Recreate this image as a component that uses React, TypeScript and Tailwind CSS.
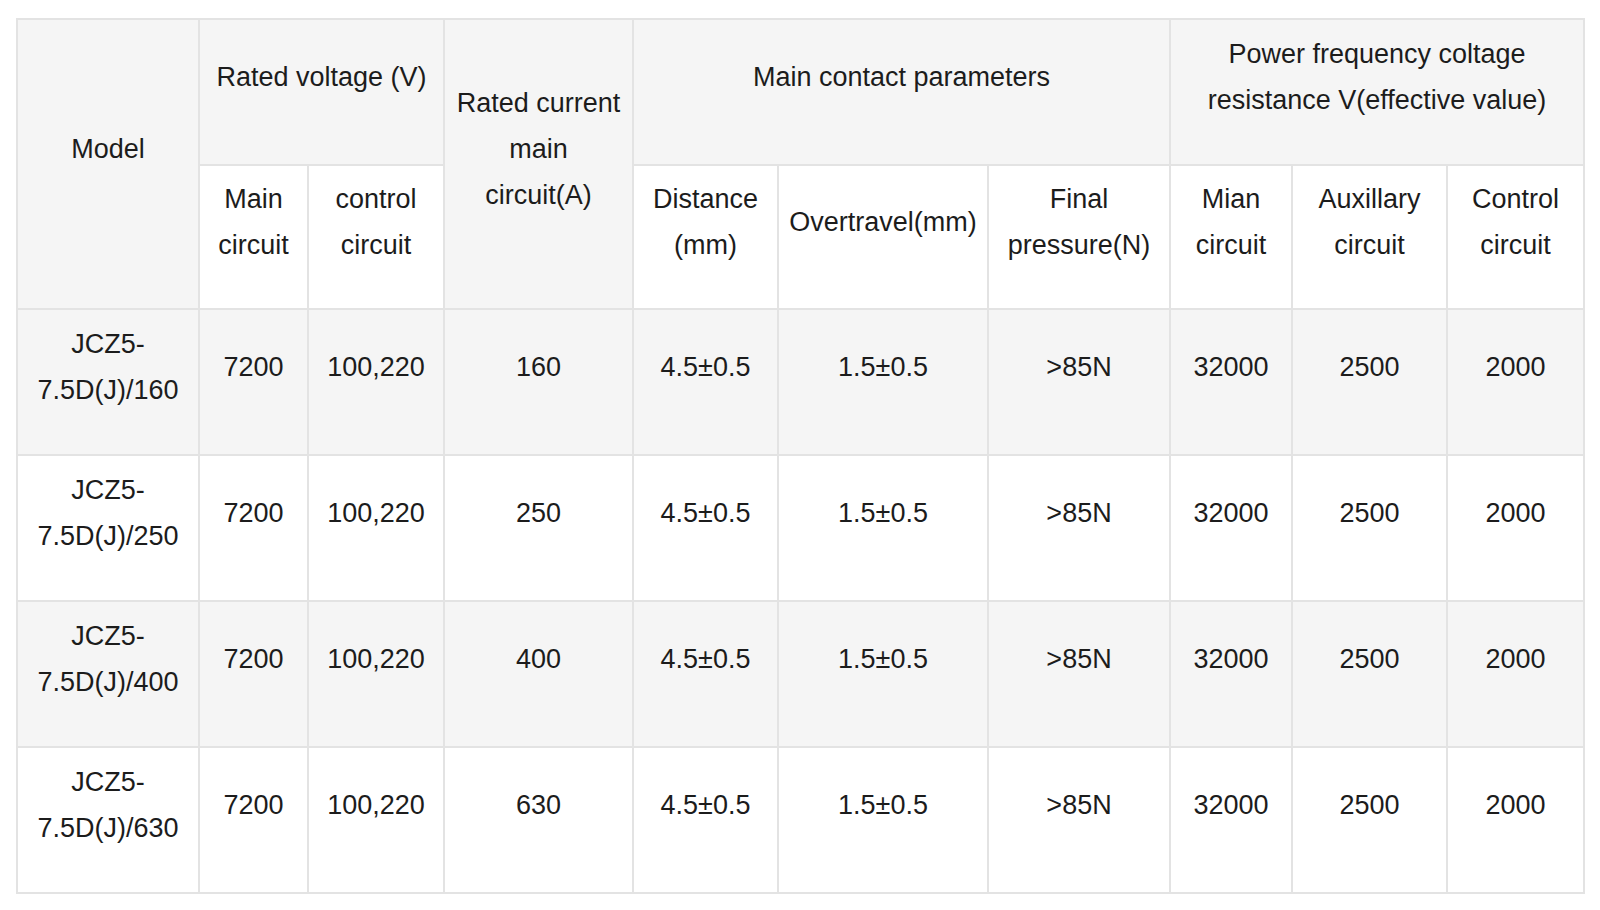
import React from "react";

const cols = [182, 109, 136, 189, 145, 210, 182, 122, 155, 137];

const rows = [
  { model: "160", a: "160" },
  { model: "250", a: "250" },
  { model: "400", a: "400" },
  { model: "630", a: "630" },
];

const cell =
  "border-2 border-[#e3e3e3] text-center align-middle px-2 pt-0 pb-[30px] font-normal";

export default function App() {
  return (
    <div
      className="min-h-[910px] bg-white pt-[18px] pl-[16px] text-[#1c1c1c] text-[27px] leading-[46px]"
      style={{ fontFamily: '"Liberation Sans", Arial, sans-serif' }}
    >
      <table className="table-fixed border-collapse w-[1567px]">
        <colgroup>
          {cols.map((w, i) => (
            <col key={i} style={{ width: w }} />
          ))}
        </colgroup>
        <thead>
          <tr className="h-[146px]">
            <th rowSpan={2} className={`${cell} bg-[#f5f5f5]`}>
              Model
            </th>
            <th colSpan={2} className={`${cell} bg-[#f5f5f5]`}>
              Rated voltage (V)
            </th>
            <th rowSpan={2} className={`${cell} bg-[#f5f5f5]`}>
              Rated current main circuit(A)
            </th>
            <th colSpan={3} className={`${cell} bg-[#f5f5f5]`}>
              Main contact parameters
            </th>
            <th colSpan={3} className={`${cell} bg-[#f5f5f5]`}>
              Power frequency coltage resistance V(effective value)
            </th>
          </tr>
          <tr className="h-[144px]">
            <th className={`${cell} bg-white`}>Main circuit</th>
            <th className={`${cell} bg-white`}>control circuit</th>
            <th className={`${cell} bg-white`}>Distance (mm)</th>
            <th className={`${cell} bg-white`}>Overtravel(mm)</th>
            <th className={`${cell} bg-white`}>Final pressure(N)</th>
            <th className={`${cell} bg-white`}>Mian circuit</th>
            <th className={`${cell} bg-white`}>Auxillary circuit</th>
            <th className={`${cell} bg-white`}>Control circuit</th>
          </tr>
        </thead>
        <tbody>
          {rows.map((r, i) => (
            <tr
              key={r.model}
              className={`h-[146px] ${i % 2 === 0 ? "bg-[#f5f5f5]" : "bg-white"}`}
            >
              <td className={cell}>JCZ5-7.5D(J)/{r.model}</td>
              <td className={cell}>7200</td>
              <td className={cell}>100,220</td>
              <td className={cell}>{r.a}</td>
              <td className={cell}>4.5±0.5</td>
              <td className={cell}>1.5±0.5</td>
              <td className={cell}>&gt;85N</td>
              <td className={cell}>32000</td>
              <td className={cell}>2500</td>
              <td className={cell}>2000</td>
            </tr>
          ))}
        </tbody>
      </table>
    </div>
  );
}
